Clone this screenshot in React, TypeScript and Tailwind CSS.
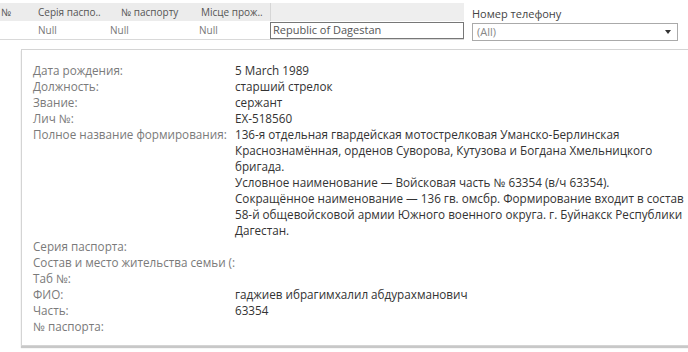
const details: [string, string[]][] = [
  ["Дата рождения:", ["5 March 1989"]],
  ["Должность:", ["старший стрелок"]],
  ["Звание:", ["сержант"]],
  ["Лич №:", ["EX-518560"]],
  [
    "Полное название формирования:",
    [
      "136-я отдельная гвардейская мотострелковая Уманско-Берлинская",
      "Краснознамённая, орденов Суворова, Кутузова и Богдана Хмельницкого",
      "бригада.",
      "Условное наименование — Войсковая часть № 63354 (в/ч 63354).",
      "Сокращённое наименование — 136 гв. омсбр. Формирование входит в состав",
      "58-й общевойсковой армии Южного военного округа. г. Буйнакск Республики",
      "Дагестан.",
    ],
  ],
  ["Серия паспорта:", []],
  ["Состав и место жительства семьи (:", []],
  ["Таб №:", []],
  ["ФИО:", ["гаджиев ибрагимхалил абдурахманович"]],
  ["Часть:", ["63354"]],
  ["№ паспорта:", []],
];

const App = () => {
  return (
    <main
      className="relative w-[688px] h-[352px] overflow-hidden bg-white text-[11px]"
      style={{ fontFamily: '"Open Sans", "Noto Sans", sans-serif' }}
    >
      <div className="flex">
        {/* table */}
        <div className="w-[464px] pt-[3px]">
          <div className="flex h-[18px] items-center bg-[#ececec] text-[#555] text-[10px]">
            <div className="w-[38px] pl-[1px]">№</div>
            <div className="w-[83px]">Серія паспо..</div>
            <div className="w-[80px]">№ паспорту</div>
            <div className="w-[69px]">Місце прож..</div>
            <div className="h-full flex-1 border-l border-[#d6d6d6] bg-[#eeeeee]"></div>
          </div>
          <div className="flex h-[19px] items-center border-b border-[#d9d9d9] text-[#777] text-[10px]">
            <div className="w-[38px]"></div>
            <div className="w-[72px]">Null</div>
            <div className="w-[89px]">Null</div>
            <div className="w-[71px]">Null</div>
            <div className="flex h-[17px] flex-1 items-center border border-[#777] px-[2px] text-[#555] text-[11px]">
              Republic of Dagestan
            </div>
          </div>
        </div>
        {/* filter */}
        <div className="ml-[8px] w-[206px] pt-[6px]">
          <p className="h-[17px] text-[11px] text-[#444]">Номер телефону</p>
          <div className="flex h-[18px] items-center justify-between border border-[#aaa] px-[4px] text-[#888] text-[11px]">
            <span>(All)</span>
            <span className="mr-[2px] h-0 w-0 border-x-[3px] border-t-[4px] border-x-transparent border-t-[#333]"></span>
          </div>
        </div>
      </div>

      {/* tooltip */}
      <div className="absolute left-[21px] top-[49px] h-[297px] w-[700px] border border-[#d4d4d4] bg-white pl-[11px] pt-[12px] text-[11.7px] shadow-[0_2px_1px_#c8c8c8]">
        {details.map(([label, lines]) => (
          <div key={label} className="flex leading-[16px]">
            <div className="w-[202px] shrink-0 whitespace-nowrap text-[#7a7a7a]">{label}</div>
            <div className="text-[#333]">
              {lines.map((l) => (
                <div key={l} className="whitespace-nowrap">{l}</div>
              ))}
            </div>
          </div>
        ))}
      </div>
    </main>
  );
};

export default App;
